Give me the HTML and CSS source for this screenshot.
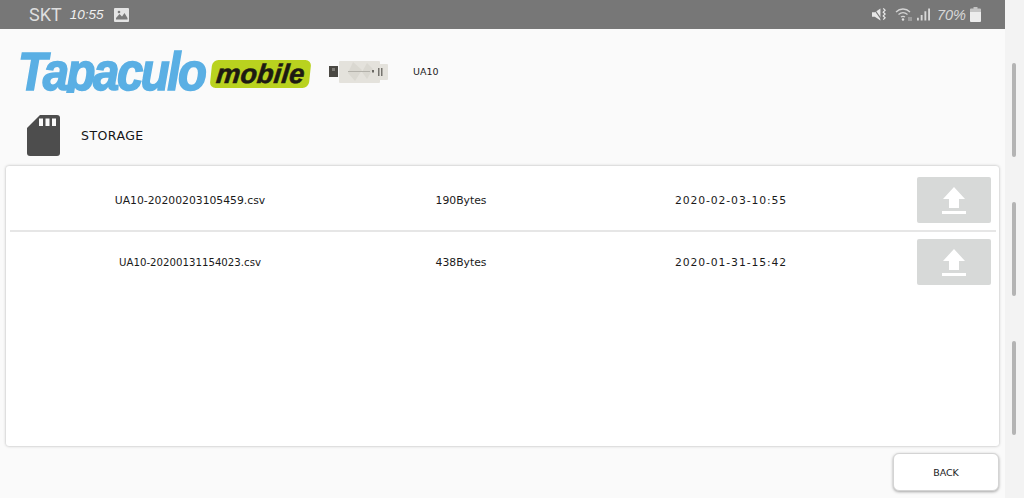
FILE: index.html
```html
<!DOCTYPE html>
<html lang="en">
<head>
<meta charset="utf-8">
<title>Storage</title>
<link rel="stylesheet" href="styles.css">
</head>
<body>
<div class="screen">
  <div class="main">
    <div class="status">
      <div class="status-left">
        <span class="carrier">SKT</span>
        <span class="clock">10:55</span>
        <svg class="pic" width="15" height="14" viewBox="0 0 15 14"><path fill="#e4e4e4" d="M1 0h13a1 1 0 0 1 1 1v12a1 1 0 0 1-1 1H1a1 1 0 0 1-1-1V1a1 1 0 0 1 1-1z"/><path fill="#7a7a7a" d="M2 10l3.500-4 2.500 2.500 2.500-3.500 3 5v1.500H2z"/><circle cx="5" cy="4" r="1.300" fill="#7a7a7a"/></svg>
      </div>
      <div class="status-right">
        <svg class="i-mute" width="15" height="15" viewBox="0 0 16 15"><path fill="#e8e8e8" d="M0 5h3l6-4v13l-6-4H0z"/><path fill="none" stroke="#777" stroke-width="1.200" d="M1 0l10 14"/><path fill="none" stroke="#e8e8e8" stroke-width="1.300" d="M12 1l2 2-2 2 2 2-2 2 2 2-2 2"/></svg>
        <svg class="i-wifi" width="18" height="15" viewBox="0 0 18 15"><path fill="none" stroke="#d4d4d4" stroke-width="1.300" d="M1 5c4-4 10-4 14 0M3.500 7.500c3-2.500 6-2.500 9 0M6 10c1.500-1 2.500-1 4 0"/><circle cx="8" cy="12.500" r="1.200" fill="#e0e0e0"/><rect x="13" y="10" width="4" height="4" fill="#9a9a9a"/></svg>
        <svg class="i-signal" width="13" height="15" viewBox="0 0 14 15"><path fill="#d8d8d8" d="M0 11h2v3H0zM4 8h2v6H4zM8 4h2v10H8zM12 1h2v13h-2z"/></svg>
        <span class="batt-text">70%</span>
        <svg class="i-batt" width="11" height="15" viewBox="0 0 11 15"><path fill="#c4c4c4" d="M3.500 0h4v1.500H10a1 1 0 0 1 1 1V5H0V2.500a1 1 0 0 1 1-1h2.500z"/><path fill="#ececec" d="M0 5h11v9a1 1 0 0 1-1 1H1a1 1 0 0 1-1-1z"/></svg>
      </div>
    </div>

    <div class="brand-row">
      <div class="logo">
        <span class="logo-name">Tapaculo</span>
        <span class="logo-pill"><span class="logo-mobile">mobile</span></span>
      </div>
      <svg class="dongle" width="60" height="24" viewBox="0 0 60 24">
        <rect x="0" y="6" width="9" height="11" fill="#4a4843"/>
        <rect x="3" y="8" width="3" height="3" fill="#7d7b76"/>
        <path fill="#e4e2dc" d="M11 1h39a1 1 0 0 1 1 1v2h7a1 1 0 0 1 1 1v14a1 1 0 0 1-1 1h-7v2a1 1 0 0 1-1 1H11a1 1 0 0 1-1-1V2a1 1 0 0 1 1-1z"/>
        <path fill="#dad8d1" d="M24 2l9 8-7 11-7-8zM38 3l6 6-6 10-5-7z"/>
        <rect x="19" y="11" width="22" height="1" fill="#b3b1aa"/>
        <rect x="43" y="10" width="2" height="2.500" fill="#6b6964"/>
        <path fill="#76746f" d="M49 8h1.500v8H49zM52 8h1.500v8H52z"/>
      </svg>
      <span class="device">UA10</span>
    </div>

    <div class="title-row">
      <svg class="sd" width="33" height="41" viewBox="0 0 33 41"><path fill="#4d4d4d" d="M13 0h17a3 3 0 0 1 3 3v35a3 3 0 0 1-3 3H3a3 3 0 0 1-3-3V13z"/><path fill="#fafafa" d="M12 3.500h4V11h-4zM18.500 3.500h4V11h-4zM25 3.500h4V11h-4z"/></svg>
      <span class="title">STORAGE</span>
    </div>

    <div class="card">
      <div class="row">
        <span class="cell">UA10-20200203105459.csv</span>
        <span class="cell">190Bytes</span>
        <span class="cell cell-date">2020-02-03-10:55</span>
        <button class="upload" type="button" aria-label="Upload">
          <svg width="24" height="27" viewBox="0 0 24 27"><path fill="#fff" d="M12 0l11 12h-6v9H7v-9H1z"/><rect y="24" width="24" height="3" fill="#fff"/></svg>
        </button>
      </div>
      <div class="row">
        <span class="cell cell-narrow">UA10-20200131154023.csv</span>
        <span class="cell">438Bytes</span>
        <span class="cell cell-date">2020-01-31-15:42</span>
        <button class="upload" type="button" aria-label="Upload">
          <svg width="24" height="27" viewBox="0 0 24 27"><path fill="#fff" d="M12 0l11 12h-6v9H7v-9H1z"/><rect y="24" width="24" height="3" fill="#fff"/></svg>
        </button>
      </div>
    </div>

    <div class="footer">
      <button class="back" type="button">BACK</button>
    </div>
  </div>
  <div class="gutter">
    <span class="thumb"></span>
    <span class="thumb"></span>
    <span class="thumb"></span>
  </div>
</div>
</body>
</html>
```

FILE: styles.css
```css
* { box-sizing: border-box; }
html, body { margin: 0; height: 100%; }
body { font-family: "DejaVu Sans", sans-serif; color: #111; overflow: hidden; background: #f5f5f5; }

.screen { display: flex; width: 1024px; height: 498px; }
.main { width: 1005px; background: #fafafa; display: flex; flex-direction: column; }
.gutter { width: 19px; background: #f3f3f3; padding: 63px 0 0 7px; display: flex; flex-direction: column; gap: 45px; }
.thumb { width: 4px; height: 94px; border-radius: 2px; background: #b4b4b4; }

.status { height: 29px; background: #777; display: flex; justify-content: space-between; align-items: center; padding: 0 24px 0 29px; color: #e6e6e6; }
.status-left, .status-right { display: flex; align-items: center; }
.carrier { font-family: "Roboto", sans-serif; font-size: 18px; color: #dedede; }
.clock { font-family: "Liberation Sans", sans-serif; font-style: italic; font-size: 13.500px; margin-left: 8px; color: #f0f0f0; }
.pic { margin-left: 10px; }
.i-wifi { margin-left: 8px; }
.i-signal { margin-left: 4px; }
.batt-text { font-family: "Liberation Sans", sans-serif; font-style: italic; font-size: 14.500px; color: #d8d8d8; margin-left: 7px; margin-right: 4px; }

.brand-row { height: 84px; display: flex; align-items: center; padding: 0 0 0 18px; }
.logo { display: flex; align-items: center; width: 292px; }
.logo-name { display: block; flex: none; width: 192px; font-family: "Liberation Sans", sans-serif; font-weight: 700; font-style: italic; font-size: 53px; line-height: 1; letter-spacing: -2.800px; color: #5aafe4; -webkit-text-stroke: 1.600px #5aafe4; transform: scaleX(0.895); transform-origin: left center; white-space: nowrap; clip-path: inset(0 -20px 4.500px 0); }
.logo-pill { flex: none; width: 99px; height: 28px; margin-top: 5px; margin-left: 1px; background: #b9d21f; border-radius: 6px; transform: skewX(-6deg); display: flex; align-items: center; justify-content: center; }
.logo-mobile { font-family: "Liberation Sans", sans-serif; font-weight: 700; font-style: italic; font-size: 27px; letter-spacing: 0.200px; color: #1d1a12; -webkit-text-stroke: 0.600px #1d1a12; }
.dongle { margin-left: 19px; margin-top: 1px; }
.device { font-size: 9.500px; margin-left: 24px; color: #222; }

.title-row { height: 53px; display: flex; align-items: center; padding: 0 0 8px 27px; }
.title { font-size: 12.500px; margin-left: 21px; letter-spacing: 0.450px; color: #151515; }
.sd { flex: none; }

.card { height: 280px; margin: 0 6px; width: 993px; background: #fff; border-radius: 3px; box-shadow: 0 0 3px rgba(0, 0, 0, 0.3); padding: 11px 0 0 4px; }
.row { display: grid; grid-template-columns: 360px 182px 358px 74px; align-items: center; width: 986px; padding-bottom: 7px; border-bottom: 2px solid #e6e6e6; }
.row + .row { margin-top: 7px; border-bottom: 0; }
.cell { text-align: center; font-size: 10.800px; color: #1a1a1a; white-space: nowrap; }
.cell-narrow { font-size: 10.200px; }
.cell-date { letter-spacing: 0.900px; }
.upload { width: 74px; height: 46px; margin-left: 7px; border: 0; padding: 0; background: #d7d9d8; border-radius: 2px; display: flex; align-items: center; justify-content: center; }

.footer { display: flex; justify-content: flex-end; padding: 7px 6px 0 0; }
.back { width: 106px; height: 38px; background: #fff; border: 1px solid #d4d4d4; border-radius: 6px; box-shadow: 0 1px 3px rgba(0, 0, 0, 0.35); font-family: "DejaVu Sans", sans-serif; font-size: 9.500px; color: #222; padding: 0; }
```
